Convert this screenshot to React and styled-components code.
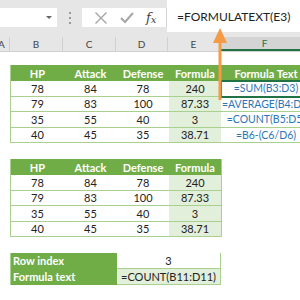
import React from 'react';
import styled, { createGlobalStyle } from 'styled-components';

const GlobalStyle = createGlobalStyle`
	html, body {
		margin: 0;
		padding: 0;
		width: 300px;
		height: 300px;
		overflow: hidden;
		background: #ffffff;
		font-family: Lato, "Open Sans", sans-serif;
	}
`;

// column widths of the sheet
const COLS = { A: 16, B: 53, C: 53, D: 52, E: 52, F: 90 };

const green = '#70ad47';
const lightGreen = '#e2efda';
const lineGreen = '#a9d08e';

const data = [
	[78, 84, 78, 240, '=SUM(B3:D3)'],
	[79, 83, 100, '87.33', '=AVERAGE(B4:D4)'],
	[35, 55, 40, 3, '=COUNT(B5:D5)'],
	[40, 45, 35, '38.71', '=B6-(C6/D6)'],
];

const FormulaArrow = () => (
	<ArrowBox width="16" height="72" viewBox="0 0 16 72">
		<polygon points="8,0 15,15 1,15" fill="#f59a45" />
		<rect x="6.5" y="14" width="3" height="58" fill="#f59a45" />
	</ArrowBox>
);

const App = () => {
	return (
		<>
			<GlobalStyle />
			<Page>
				<Toolbar>
					<NameBox>
						<DropArrow />
					</NameBox>
					<Grip>
						<span />
						<span />
						<span />
					</Grip>
					<Buttons>
						<svg width="14" height="14" viewBox="0 0 14 14">
							<path d="M1.5 1.5 L12.5 12.5 M12.5 1.5 L1.5 12.5" stroke="#a6a6a6" strokeWidth="1.4" />
						</svg>
						<svg width="16" height="14" viewBox="0 0 16 14">
							<path d="M2 7 L6 11 L14 2" stroke="#a6a6a6" strokeWidth="2" fill="none" />
						</svg>
						<Fx>
							f<sub>x</sub>
						</Fx>
					</Buttons>
					<FormulaInput>=FORMULATEXT(E3)</FormulaInput>
				</Toolbar>

				<ColumnHeaders>
					{Object.entries(COLS).map(([name, w]) => (
						<ColHead key={name} $w={w} $active={name === 'F'} $first={name === 'A'}>
							{name}
						</ColHead>
					))}
				</ColumnHeaders>

				<Sheet>
					<Table $cols="53px 53px 52px 52px 90px">
						<Head>HP</Head>
						<Head>Attack</Head>
						<Head>Defense</Head>
						<Head>Formula</Head>
						<Head>Formula Text</Head>
						{data.map((row, i) => (
							<React.Fragment key={i}>
								<Cell>{row[0]}</Cell>
								<Cell>{row[1]}</Cell>
								<Cell>{row[2]}</Cell>
								<Cell $fill={lightGreen}>{row[3]}</Cell>
								<Cell $blue $selected={i === 0}>
									{row[4]}
								</Cell>
							</React.Fragment>
						))}
					</Table>

					<Table $cols="53px 53px 52px 52px" $closed>
						<Head>HP</Head>
						<Head>Attack</Head>
						<Head>Defense</Head>
						<Head>Formula</Head>
						{data.map((row, i) => (
							<React.Fragment key={i}>
								<Cell>{row[0]}</Cell>
								<Cell>{row[1]}</Cell>
								<Cell>{row[2]}</Cell>
								<Cell $fill={lightGreen}>{row[3]}</Cell>
							</React.Fragment>
						))}
					</Table>

					<Table $cols="106px 103px" $closed>
						<Label>Row index</Label>
						<Cell>3</Cell>
						<Label>Formula text</Label>
						<Cell $fill={lightGreen}>=COUNT(B11:D11)</Cell>
					</Table>
				</Sheet>

				<FormulaArrow />
			</Page>
		</>
	);
};

export default App;

const Page = styled.div`
	position: relative;
	width: 300px;
	height: 300px;
	overflow: hidden;
`;

const Toolbar = styled.div`
	display: flex;
	align-items: flex-start;
	height: 37px;
	background: #e6e6e6;
`;

const NameBox = styled.div`
	position: relative;
	width: 57px;
	height: 19px;
	margin-top: 8px;
	background: #ffffff;
`;

const DropArrow = styled.div`
	position: absolute;
	right: 5px;
	top: 8px;
	border-left: 3px solid transparent;
	border-right: 3px solid transparent;
	border-top: 3px solid #666;
`;

const Grip = styled.div`
	display: flex;
	flex-direction: column;
	align-items: center;
	gap: 3px;
	width: 25px;
	margin-top: 12px;
	span {
		width: 2px;
		height: 2px;
		background: #9a9a9a;
	}
`;

const Buttons = styled.div`
	display: flex;
	align-items: center;
	justify-content: space-around;
	width: 85px;
	height: 19px;
	margin-top: 8px;
	padding: 0 4px 0 6px;
	box-sizing: border-box;
	background: #ffffff;
	border-right: 1px solid #d4d4d4;
`;

const Fx = styled.span`
	font-family: "DejaVu Serif", "Liberation Serif", serif;
	font-style: italic;
	font-size: 13px;
	color: #444;
	sub {
		font-size: 10px;
		vertical-align: -1px;
	}
`;

const FormulaInput = styled.div`
	flex: 1;
	height: 32px;
	padding-left: 10px;
	display: flex;
	align-items: center;
	background: #ffffff;
	font-size: 12px;
	color: #222;
	white-space: nowrap;
`;

const ColumnHeaders = styled.div`
	display: flex;
	height: 14px;
	background: #e6e6e6;
	border-bottom: 1px solid #d0d0d0;
`;

const ColHead = styled.div`
	flex: 0 0 ${(p) => p.$w}px;
	margin-left: ${(p) => (p.$first ? '-6px' : '0')};
	box-sizing: border-box;
	display: flex;
	align-items: center;
	justify-content: center;
	font-size: 10px;
	color: ${(p) => (p.$active ? '#217346' : '#444')};
	background: ${(p) => (p.$active ? '#d4d4d4' : 'transparent')};
	border-right: 1px solid #d0d0d0;
	border-bottom: ${(p) => (p.$active ? '2px solid #217346' : 'none')};
`;

const Sheet = styled.div`
	display: flex;
	flex-direction: column;
	gap: 16px;
	padding: 13px 0 0 10px;
`;

const Table = styled.div`
	display: grid;
	grid-template-columns: ${(p) => p.$cols};
	grid-auto-rows: 15.5px;
	grid-template-rows: 16px;
	width: max-content;
	border-left: 1px solid ${lineGreen};
	border-right: ${(p) => (p.$closed ? `1px solid ${lineGreen}` : 'none')};
	font-size: 11px;
	color: #222;
`;

const Head = styled.div`
	display: flex;
	align-items: center;
	justify-content: center;
	background: ${green};
	color: #ffffff;
	font-weight: bold;
	white-space: nowrap;
`;

const Cell = styled.div`
	position: relative;
	display: flex;
	align-items: center;
	justify-content: center;
	box-sizing: border-box;
	background: ${(p) => p.$fill || '#ffffff'};
	color: ${(p) => (p.$blue ? '#2e75b6' : '#222')};
	font-size: ${(p) => (p.$blue ? '10.5px' : 'inherit')};
	border-bottom: 1px solid ${lineGreen};
	white-space: nowrap;
	overflow: ${(p) => (p.$blue ? 'hidden' : 'visible')};
	outline: ${(p) => (p.$selected ? '2px solid #217346' : 'none')};
	outline-offset: -1px;
	z-index: ${(p) => (p.$selected ? 1 : 0)};
`;

const Label = styled.div`
	display: flex;
	align-items: center;
	padding-left: 2px;
	background: ${green};
	color: #ffffff;
	font-weight: bold;
	border-bottom: 1px solid ${green};
`;

const ArrowBox = styled.svg`
	position: absolute;
	left: 212px;
	top: 28px;
	z-index: 2;
`;
